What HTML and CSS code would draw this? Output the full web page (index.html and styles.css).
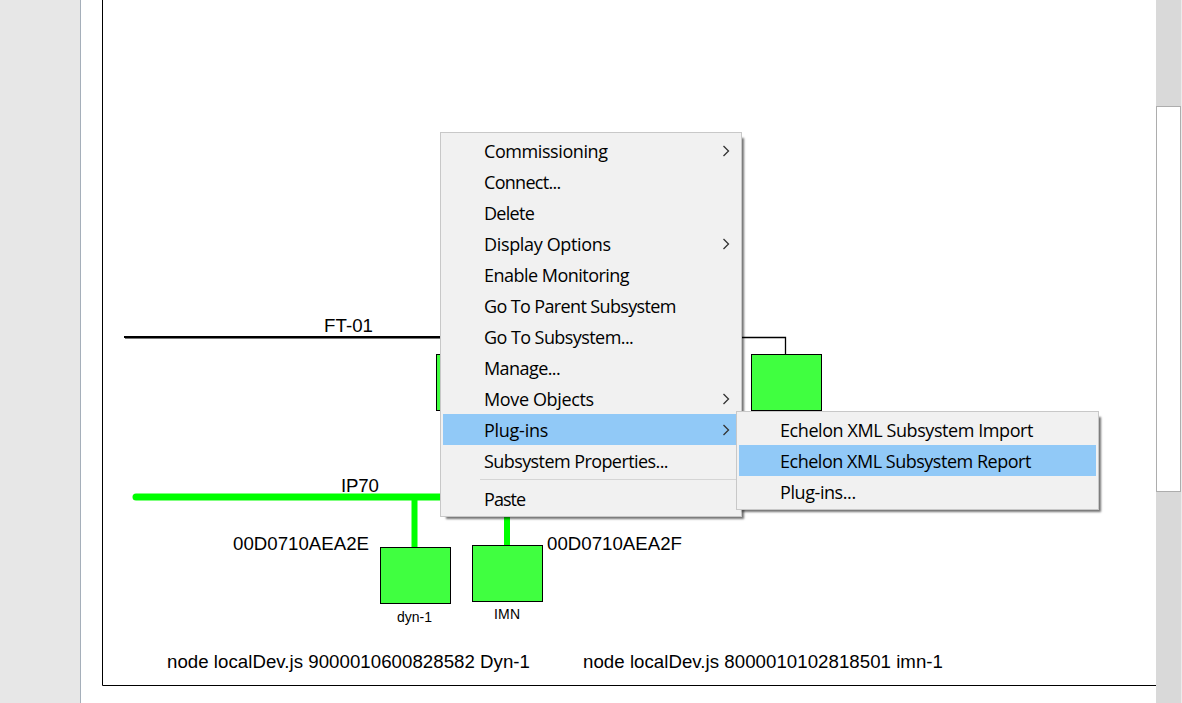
FILE: index.html
```
<!DOCTYPE html>
<html lang="en">
<head>
<meta charset="utf-8">
<title>Subsystem drawing</title>
<link rel="stylesheet" href="styles.css">
</head>
<body>
<div class="app">
  <aside class="gutter"></aside>
  <main class="canvas">
    <svg class="drawing" width="1075" height="703" viewBox="81 0 1075 703">
      <path class="page-edge" d="M102.5 0V685.5H1156"/>
      <g class="ft-channel">
        <path class="ft-main" d="M124 337H440"/>
        <path class="ft-shade" d="M125 338.5H440"/>
        <path class="ft-drop" d="M440 337.5H785.5V354"/>
      </g>
      <g class="ip-channel">
        <path class="ip-bus" d="M136 497H507"/>
        <path class="ip-drop" d="M414.5 497V547M507 497V545"/>
      </g>
      <g class="device">
        <rect x="436.5" y="354.5" width="70" height="56"/>
        <rect x="751.5" y="354.5" width="70" height="56"/>
        <rect x="380.5" y="547.5" width="70" height="56"/>
        <rect x="472.5" y="545.5" width="70" height="56"/>
      </g>
      <g class="label">
        <text x="324" y="332" textLength="49">FT-01</text>
        <text x="341" y="492" textLength="38">IP70</text>
        <text x="233" y="550" textLength="136">00D0710AEA2E</text>
        <text x="547" y="550" textLength="135">00D0710AEA2F</text>
        <text x="167" y="668" textLength="363">node localDev.js 9000010600828582 Dyn-1</text>
        <text x="583" y="668" textLength="360">node localDev.js 8000010102818501 imn-1</text>
      </g>
      <g class="device-name">
        <text x="397" y="622" textLength="35">dyn-1</text>
        <text x="494" y="619" textLength="26">IMN</text>
      </g>
    </svg>
  </main>
  <div class="scrollbar"><div class="thumb"></div></div>
</div>

<ul class="menu context-menu">
  <li class="item commissioning">Commissioning<svg class="chevron" viewBox="0 0 8 12"><path d="M1.5 1L6.5 6L1.5 11"/></svg></li>
  <li class="item connect">Connect...</li>
  <li class="item delete">Delete</li>
  <li class="item display">Display Options<svg class="chevron" viewBox="0 0 8 12"><path d="M1.5 1L6.5 6L1.5 11"/></svg></li>
  <li class="item monitoring">Enable Monitoring</li>
  <li class="item parent">Go To Parent Subsystem</li>
  <li class="item goto">Go To Subsystem...</li>
  <li class="item manage">Manage...</li>
  <li class="item move">Move Objects<svg class="chevron" viewBox="0 0 8 12"><path d="M1.5 1L6.5 6L1.5 11"/></svg></li>
  <li class="item plugins active">Plug-ins<svg class="chevron" viewBox="0 0 8 12"><path d="M1.5 1L6.5 6L1.5 11"/></svg></li>
  <li class="item properties">Subsystem Properties...</li>
  <li class="separator"></li>
  <li class="item paste">Paste</li>
</ul>

<ul class="menu submenu">
  <li class="item import">Echelon XML Subsystem Import</li>
  <li class="item report active">Echelon XML Subsystem Report</li>
  <li class="item more">Plug-ins...</li>
</ul>
</body>
</html>
```
FILE: styles.css
```
* { box-sizing: border-box; }
body { margin: 0; overflow: hidden; background: #fff; }
.app { display: flex; width: 1182px; height: 703px; }
.gutter { width: 81px; background: #e7e7e7; border-right: 1px solid #a5afba; }
.canvas { width: 1075px; background: #fff; }
.drawing { display: block; }
.scrollbar { width: 26px; padding-top: 106px; background: #d9d9d9; border-right: 1px solid #ececec; }
.thumb { height: 386px; background: #fff; border: 1px solid #adadad; }

.page-edge { fill: none; stroke: #000; stroke-width: 1; }
.ft-main { stroke: #000; stroke-width: 2; }
.ft-shade { stroke: #777; stroke-width: 1; }
.ft-drop { fill: none; stroke: #000; stroke-width: 1.3; }
.ip-bus { stroke: #0f0; stroke-width: 7; stroke-linecap: round; }
.ip-drop { stroke: #0f0; stroke-width: 6; }
.device rect { fill: #40ff40; stroke: #000; stroke-width: 1; }
.label { font: 18.67px "Liberation Sans", Arial, sans-serif; }
.device-name { font: 14px "Liberation Sans", Arial, sans-serif; }

.menu {
  position: absolute;
  margin: 0;
  padding: 2px;
  list-style: none;
  background: #f1f1f1;
  border: 1px solid #c8c8c8;
  box-shadow: 4px 4px 2px -2px rgba(0, 0, 0, 0.55);
  font: 18px/29px "Open Sans", "Segoe UI", sans-serif;
  color: #000;
}
.context-menu { left: 440px; top: 132px; width: 302px; height: 385px; }
.submenu { left: 736px; top: 411px; width: 363px; height: 99px; }
.item {
  display: flex;
  align-items: center;
  justify-content: space-between;
  height: 31px;
  padding: 2px 9px 0 41px;
  white-space: nowrap;
}
.active { background: #91c9f7; }
.chevron { width: 8px; height: 12px; margin-top: -2px; fill: none; stroke: #333; stroke-width: 1.3; }
.separator { height: 7px; margin-left: 37px; padding-top: 3px; }
.separator::before { content: ""; display: block; height: 1px; background: #d5d5d5; }

/* label tracking */
.commissioning, .import, .more { letter-spacing: -0.42px; }
.connect, .delete { letter-spacing: -0.7px; }
.display { letter-spacing: -0.35px; }
.monitoring { letter-spacing: -0.52px; }
.parent { letter-spacing: -0.63px; }
.goto, .manage { letter-spacing: -0.57px; }
.move { letter-spacing: -0.37px; }
.plugins { letter-spacing: -0.27px; }
.properties { letter-spacing: -0.58px; }
.paste { letter-spacing: -0.95px; }
.report { letter-spacing: -0.48px; }
```
